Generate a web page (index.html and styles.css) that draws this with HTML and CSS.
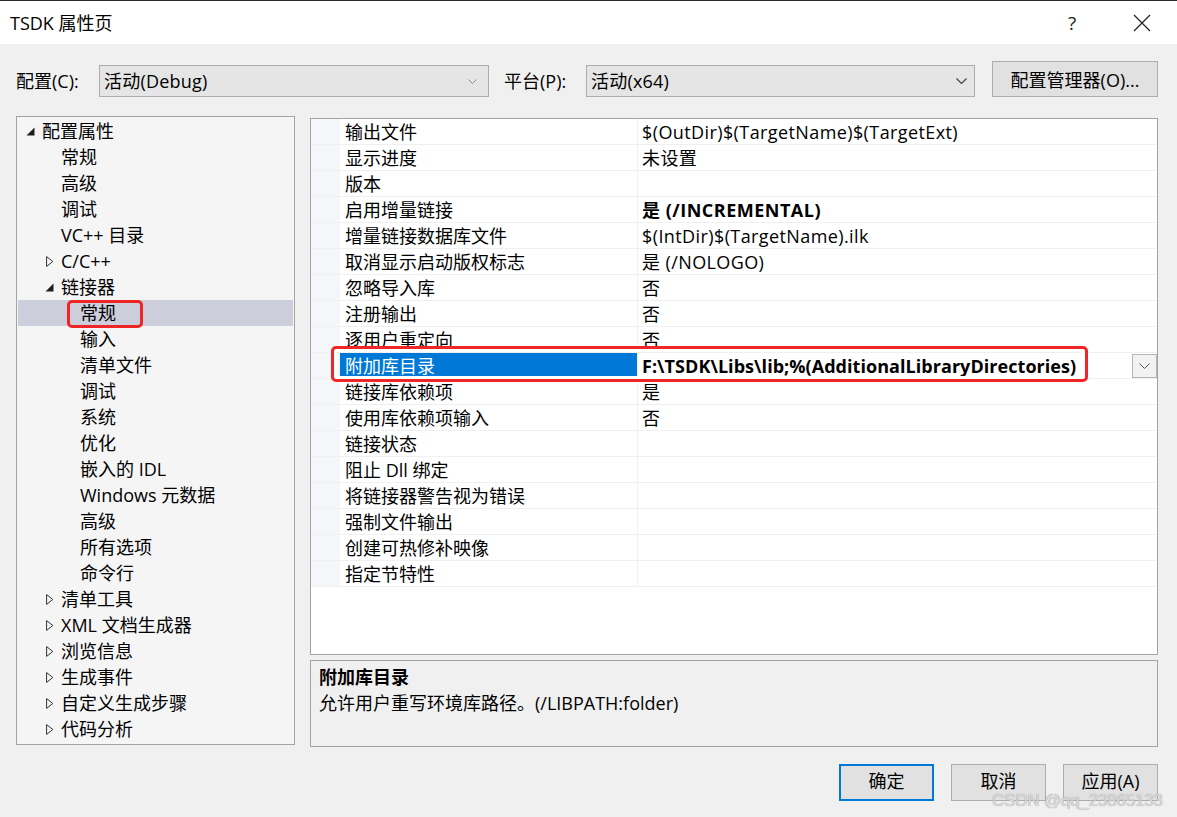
FILE: index.html
```html
<!DOCTYPE html>
<html lang="zh-CN">
<head>
<meta charset="utf-8">
<title>TSDK 属性页</title>
<link rel="stylesheet" href="styles.css">
</head>
<body>
<div class="window">
  <header class="titlebar">
    <span class="title">TSDK 属性页</span>
    <span class="tb-btn help">?</span>
    <span class="tb-btn close"><svg width="18" height="18" viewBox="0 0 18 18"><path d="M1 1 L17 17 M17 1 L1 17" stroke="#222" stroke-width="1.2" fill="none"/></svg></span>
  </header>

  <div class="config-row">
    <span class="lbl lbl-config">配置(C):</span>
    <div class="combo combo-config"><span class="combo-text">活动(Debug)</span><svg class="chev" width="9" height="5" viewBox="0 0 9 5"><path d="M0.5 0.5 L4.5 4.5 L8.5 0.5" stroke="#8a8a8a" fill="none"/></svg></div>
    <span class="lbl lbl-platform">平台(P):</span>
    <div class="combo combo-platform"><span class="combo-text">活动(x64)</span><svg class="chev chev-dark" width="11" height="6" viewBox="0 0 11 6"><path d="M0.5 0.5 L5.5 5.5 L10.5 0.5" stroke="#444" stroke-width="1.2" fill="none"/></svg></div>
    <button class="btn btn-manager">配置管理器(O)...</button>
  </div>

  <div class="main">
    <div class="tree">
      <div class="trow l0"><span class="tw"><svg width="9" height="9" viewBox="0 0 9 9"><path d="M8.5 0.5 L8.5 8.5 L0.5 8.5 Z" fill="#1e1e1e"/></svg></span><span>配置属性</span></div>
      <div class="trow l1"><span class="tw"></span><span>常规</span></div>
      <div class="trow l1"><span class="tw"></span><span>高级</span></div>
      <div class="trow l1"><span class="tw"></span><span>调试</span></div>
      <div class="trow l1"><span class="tw"></span><span>VC++ 目录</span></div>
      <div class="trow l1"><span class="tw"><svg class="col" width="8" height="11" viewBox="0 0 8 11"><path d="M0.6 0.6 L6.8 5.5 L0.6 10.4 Z" stroke="#333" stroke-width="1" fill="none"/></svg></span><span>C/C++</span></div>
      <div class="trow l1"><span class="tw"><svg width="9" height="9" viewBox="0 0 9 9"><path d="M8.5 0.5 L8.5 8.5 L0.5 8.5 Z" fill="#1e1e1e"/></svg></span><span>链接器</span></div>
      <div class="trow l2 selected"><span class="tw"></span><span>常规</span></div>
      <div class="trow l2"><span class="tw"></span><span>输入</span></div>
      <div class="trow l2"><span class="tw"></span><span>清单文件</span></div>
      <div class="trow l2"><span class="tw"></span><span>调试</span></div>
      <div class="trow l2"><span class="tw"></span><span>系统</span></div>
      <div class="trow l2"><span class="tw"></span><span>优化</span></div>
      <div class="trow l2"><span class="tw"></span><span>嵌入的 IDL</span></div>
      <div class="trow l2"><span class="tw"></span><span>Windows 元数据</span></div>
      <div class="trow l2"><span class="tw"></span><span>高级</span></div>
      <div class="trow l2"><span class="tw"></span><span>所有选项</span></div>
      <div class="trow l2"><span class="tw"></span><span>命令行</span></div>
      <div class="trow l1"><span class="tw"><svg class="col" width="8" height="11" viewBox="0 0 8 11"><path d="M0.6 0.6 L6.8 5.5 L0.6 10.4 Z" stroke="#333" stroke-width="1" fill="none"/></svg></span><span>清单工具</span></div>
      <div class="trow l1"><span class="tw"><svg class="col" width="8" height="11" viewBox="0 0 8 11"><path d="M0.6 0.6 L6.8 5.5 L0.6 10.4 Z" stroke="#333" stroke-width="1" fill="none"/></svg></span><span>XML 文档生成器</span></div>
      <div class="trow l1"><span class="tw"><svg class="col" width="8" height="11" viewBox="0 0 8 11"><path d="M0.6 0.6 L6.8 5.5 L0.6 10.4 Z" stroke="#333" stroke-width="1" fill="none"/></svg></span><span>浏览信息</span></div>
      <div class="trow l1"><span class="tw"><svg class="col" width="8" height="11" viewBox="0 0 8 11"><path d="M0.6 0.6 L6.8 5.5 L0.6 10.4 Z" stroke="#333" stroke-width="1" fill="none"/></svg></span><span>生成事件</span></div>
      <div class="trow l1"><span class="tw"><svg class="col" width="8" height="11" viewBox="0 0 8 11"><path d="M0.6 0.6 L6.8 5.5 L0.6 10.4 Z" stroke="#333" stroke-width="1" fill="none"/></svg></span><span>自定义生成步骤</span></div>
      <div class="trow l1"><span class="tw"><svg class="col" width="8" height="11" viewBox="0 0 8 11"><path d="M0.6 0.6 L6.8 5.5 L0.6 10.4 Z" stroke="#333" stroke-width="1" fill="none"/></svg></span><span>代码分析</span></div>
      <div class="mark mark-tree"></div>
    </div>

    <div class="right">
      <div class="grid">
        <div class="grow"><span class="gut"></span><span class="name">输出文件</span><span class="val">$(OutDir)$(TargetName)$(TargetExt)</span></div>
        <div class="grow"><span class="gut"></span><span class="name">显示进度</span><span class="val">未设置</span></div>
        <div class="grow"><span class="gut"></span><span class="name">版本</span><span class="val"></span></div>
        <div class="grow"><span class="gut"></span><span class="name">启用增量链接</span><span class="val bold bold-inc">是 (/INCREMENTAL)</span></div>
        <div class="grow"><span class="gut"></span><span class="name">增量链接数据库文件</span><span class="val">$(IntDir)$(TargetName).ilk</span></div>
        <div class="grow"><span class="gut"></span><span class="name">取消显示启动版权标志</span><span class="val">是 (/NOLOGO)</span></div>
        <div class="grow"><span class="gut"></span><span class="name">忽略导入库</span><span class="val">否</span></div>
        <div class="grow"><span class="gut"></span><span class="name">注册输出</span><span class="val">否</span></div>
        <div class="grow"><span class="gut"></span><span class="name">逐用户重定向</span><span class="val">否</span></div>
        <div class="grow sel"><span class="gut"></span><span class="name">附加库目录</span><span class="val bold"><span class="val-text">F:\TSDK\Libs\lib;%(AdditionalLibraryDirectories)</span><span class="ddbtn"><svg width="11" height="6" viewBox="0 0 11 6"><path d="M0.5 0.5 L5.5 5.5 L10.5 0.5" stroke="#555" fill="none"/></svg></span></span></div>
        <div class="grow"><span class="gut"></span><span class="name">链接库依赖项</span><span class="val">是</span></div>
        <div class="grow"><span class="gut"></span><span class="name">使用库依赖项输入</span><span class="val">否</span></div>
        <div class="grow"><span class="gut"></span><span class="name">链接状态</span><span class="val"></span></div>
        <div class="grow"><span class="gut"></span><span class="name">阻止 Dll 绑定</span><span class="val"></span></div>
        <div class="grow"><span class="gut"></span><span class="name">将链接器警告视为错误</span><span class="val"></span></div>
        <div class="grow"><span class="gut"></span><span class="name">强制文件输出</span><span class="val"></span></div>
        <div class="grow"><span class="gut"></span><span class="name">创建可热修补映像</span><span class="val"></span></div>
        <div class="grow"><span class="gut"></span><span class="name">指定节特性</span><span class="val"></span></div>
        <div class="mark mark-grid"></div>
      </div>
      <div class="desc">
        <div class="desc-title">附加库目录</div>
        <div class="desc-text">允许用户重写环境库路径。(/LIBPATH:folder)</div>
      </div>
    </div>
  </div>

  <div class="buttons">
    <button class="btn btn-dlg btn-default">确定</button>
    <button class="btn btn-dlg">取消</button>
    <button class="btn btn-dlg">应用(A)</button>
  </div>

  <div class="watermark">CSDN @qq_23865133</div>
</div>
</body>
</html>
```

FILE: styles.css
```css
* { box-sizing: border-box; }

html, body {
  margin: 0;
  padding: 0;
}

body {
  width: 1177px;
  height: 817px;
  overflow: hidden;
  background: #f0f0f0;
  font-family: "Open Sans", "Noto Sans CJK SC", sans-serif;
  font-size: 18px;
  color: #000;
}

.window {
  position: relative;
  height: 817px;
}

/* title bar */
.titlebar {
  height: 44px;
  border-top: 1px solid #2b2b2b;
  background: #fff;
  display: flex;
  align-items: center;
  padding: 0 12px 0 10px;
}

.title {
  flex: 1;
  line-height: 24px;
}

.tb-btn {
  width: 46px;
  height: 30px;
  display: flex;
  align-items: center;
  justify-content: center;
}

.help {
  margin-right: 24px;
  font-size: 19px;
  color: #222;
}

/* config row */
.config-row {
  display: flex;
  align-items: flex-end;
  height: 53px;
  padding-left: 16px;
}

.lbl {
  line-height: 32px;
  height: 32px;
  white-space: nowrap;
}

.lbl-config { width: 83px; }
.lbl-platform { width: 82px; margin-left: 15px; }

.combo {
  height: 32px;
  border: 1px solid #adadad;
  background: #e5e5e5;
  display: flex;
  align-items: center;
  padding-left: 4px;
}

.combo-config { width: 390px; }
.combo-platform { width: 389px; }

.combo-text {
  flex: 1;
  line-height: 26px;
  letter-spacing: 0.2px;
}

.chev { margin-right: 11px; }
.chev-dark { margin-right: 7px; }

.btn {
  font: inherit;
  color: #000;
  background: #e1e1e1;
  border: 1px solid #adadad;
  padding: 0;
  margin: 0;
}

.btn-manager {
  width: 166px;
  height: 36px;
  margin-left: 17px;
}

/* main area */
.main {
  display: flex;
  align-items: flex-start;
  padding: 19px 0 0 16px;
}

.tree {
  position: relative;
  width: 279px;
  height: 629px;
  border: 1px solid #a3a3a3;
  background: #f5f5f5;
  padding-top: 1px;
}

.trow {
  display: flex;
  align-items: center;
  height: 26px;
  line-height: 26px;
  white-space: nowrap;
}

.trow.l0 { padding-left: 8px; }
.trow.l1 { padding-left: 27px; }
.trow.l2 { padding-left: 46px; }

.trow.selected {
  background: #cccedb;
  margin: 0 1px;
  padding-left: 45px;
}

.tw {
  width: 17px;
  height: 26px;
  display: flex;
  align-items: center;
  flex-shrink: 0;
}

.tw svg { margin-left: 1px; margin-top: 1px; }
.tw svg.col { margin-left: 2px; margin-top: 0; }

.mark {
  position: absolute;
  border: 3px solid #f02525;
  border-radius: 5px;
}

.mark-tree {
  left: 50px;
  top: 183px;
  width: 76px;
  height: 28px;
}

.right {
  width: 848px;
  margin-left: 15px;
  margin-top: 2px;
  display: flex;
  flex-direction: column;
  gap: 5px;
}

.grid {
  position: relative;
  height: 537px;
  border: 1px solid #a3a3a3;
  background: #fff;
}

.grow {
  display: flex;
  height: 26px;
  border-bottom: 1px solid #f0f0f0;
  line-height: 25px;
  white-space: nowrap;
}

.gut {
  width: 29px;
  background: #f4f6fa;
  flex-shrink: 0;
}

.name {
  width: 298px;
  padding: 2px 0 0 5px;
  line-height: 23px;
  border-right: 1px solid #f0f0f0;
  flex-shrink: 0;
  overflow: hidden;
}

.val {
  flex: 1;
  padding: 2px 0 0 4px;
  line-height: 23px;
  letter-spacing: 0.4px;
  display: flex;
  align-items: center;
}

.bold { font-weight: bold; }
.val.bold { letter-spacing: 0.05px; }
.val.bold-inc { letter-spacing: 0.5px; }

.grow.sel .name {
  background: #0078d7;
  color: #fff;
}

.grow.sel .val { padding-top: 0; }
.grow.sel .val-text { padding-top: 2px; }

.val-text { flex: 1; }

.ddbtn {
  width: 25px;
  height: 24px;
  border: 1px solid #b5b5b5;
  background: #f2f2f2;
  display: flex;
  align-items: center;
  justify-content: center;
}

.mark-grid {
  left: 20px;
  top: 227px;
  width: 757px;
  height: 36px;
  box-shadow: inset 0 0 0 3px #fff;
}

.desc {
  height: 87px;
  border: 1px solid #a3a3a3;
  background: #f0f0f0;
  padding: 3px 8px 0;
  line-height: 26px;
}

.desc-title { font-weight: bold; }

/* bottom buttons */
.buttons {
  display: flex;
  justify-content: flex-end;
  gap: 17px;
  padding: 17px 19px 0 0;
}

.btn-dlg {
  width: 95px;
  height: 37px;
  padding-bottom: 3px;
  line-height: 22px;
}

.btn-default {
  border: 2px solid #0078d7;
}

.watermark {
  position: absolute;
  left: 992px;
  top: 793px;
  font-family: "Liberation Sans", Arial, sans-serif;
  font-size: 17px;
  letter-spacing: -0.2px;
  line-height: 16px;
  color: #dadada;
  text-shadow: 0 0 1px #8c8c8c;
  white-space: nowrap;
}
```
